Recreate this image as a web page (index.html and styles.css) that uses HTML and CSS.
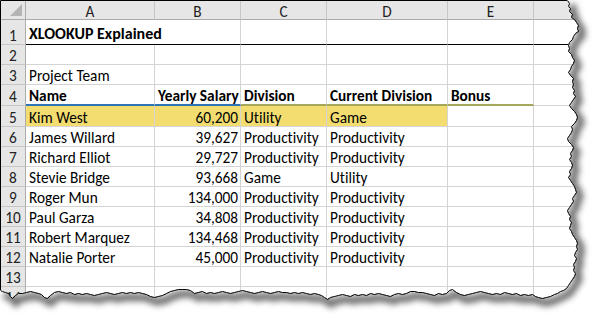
FILE: index.html
```html
<!DOCTYPE html>
<html>
<head>
<meta charset="utf-8">
<link rel="stylesheet" href="styles.css">
</head>
<body>
<div class="page">
  <div class="sheet">
    <div class="corner"><span class="tri"></span></div>
    <div class="ch">A</div><div class="ch">B</div><div class="ch">C</div><div class="ch">D</div><div class="ch">E</div><div class="ch">F</div>

    <div class="rh r1">1</div><div class="c r1 title span2">XLOOKUP Explained</div><div class="c r1"></div><div class="c r1"></div><div class="c r1"></div><div class="c r1"></div>

    <div class="rh">2</div><div class="c"></div><div class="c"></div><div class="c"></div><div class="c"></div><div class="c"></div><div class="c"></div>

    <div class="rh">3</div><div class="c">Project Team</div><div class="c"></div><div class="c"></div><div class="c"></div><div class="c"></div><div class="c"></div>

    <div class="rh">4</div><div class="c b hb">Name</div><div class="c b hb">Yearly Salary</div><div class="c b ho">Division</div><div class="c b ho">Current Division</div><div class="c b ho">Bonus</div><div class="c"></div>

    <div class="rh">5</div><div class="c y">Kim West</div><div class="c y num">60,200</div><div class="c y">Utility</div><div class="c y">Game</div><div class="c"></div><div class="c"></div>

    <div class="rh">6</div><div class="c">James Willard</div><div class="c num">39,627</div><div class="c">Productivity</div><div class="c">Productivity</div><div class="c"></div><div class="c"></div>

    <div class="rh">7</div><div class="c">Richard Elliot</div><div class="c num">29,727</div><div class="c">Productivity</div><div class="c">Productivity</div><div class="c"></div><div class="c"></div>

    <div class="rh">8</div><div class="c">Stevie Bridge</div><div class="c num">93,668</div><div class="c">Game</div><div class="c">Utility</div><div class="c"></div><div class="c"></div>

    <div class="rh">9</div><div class="c">Roger Mun</div><div class="c num">134,000</div><div class="c">Productivity</div><div class="c">Productivity</div><div class="c"></div><div class="c"></div>

    <div class="rh">10</div><div class="c">Paul Garza</div><div class="c num">34,808</div><div class="c">Productivity</div><div class="c">Productivity</div><div class="c"></div><div class="c"></div>

    <div class="rh">11</div><div class="c">Robert Marquez</div><div class="c num">134,468</div><div class="c">Productivity</div><div class="c">Productivity</div><div class="c"></div><div class="c"></div>

    <div class="rh">12</div><div class="c">Natalie Porter</div><div class="c num">45,000</div><div class="c">Productivity</div><div class="c">Productivity</div><div class="c"></div><div class="c"></div>

    <div class="rh">13</div><div class="c"></div><div class="c"></div><div class="c"></div><div class="c"></div><div class="c"></div><div class="c"></div>

    <div class="rh">14</div><div class="c"></div><div class="c"></div><div class="c"></div><div class="c"></div><div class="c"></div><div class="c"></div>
  </div>

  <svg class="tear" width="597" height="319" viewBox="0 0 597 319" aria-hidden="true">
    <defs>
      <path id="edge" d="M567,0 L569,3 568,6 570,8 569,11 572,14 571,17 574,19 576,22 578,25 577,28 578,31 575,33 573,36 572,39 569,42 568,45 569,48 568,51 571,54 572,57 574,60 573,63 571,66 570,69 568,72 570,75 573,78 572,81 573,84 572,87 574,90 573,93 575,96 573,99 571,102 569,105 571,108 574,111 576,114 577,117 576,120 574,123 571,126 572,129 571,132 569,135 567,138 568,141 571,144 573,147 572,150 570,153 571,156 569,159 571,162 572,165 571,168 569,171 570,174 568,177 570,180 572,183 574,186 575,189 576,192 574,195 572,198 573,201 571,204 569,207 567,210 568,213 570,216 569,219 571,222 570,225 569,228 571,231 572,234 574,237 576,240 577,243 576,246 577,249 575,252 574,255 576,258 575,261 573,264 574,267 573,270 575,273 574,276 572,279 570,282 568,285 566,288 563,290 560,291 557,293 554,294 550,296 546,297 542,298 538,297 535,296 532,294 528,295 524,294 520,295 516,293 512,294 508,293 504,292 500,294 496,293 492,294 488,293 484,292 480,291 476,292 472,293 468,294 464,295 460,294 456,292 452,289 449,290 446,293 442,294 438,293 434,295 430,294 426,293 422,292 418,292 414,291 410,291 406,293 402,294 398,293 394,294 390,296 386,295 382,294 378,293 374,294 370,293 366,295 362,294 358,295 354,294 350,296 346,295 342,294 338,295 334,296 330,297 327,299 324,297 321,295 318,294 314,293 310,294 306,293 302,292 298,293 294,292 290,293 286,292 282,292 278,291 274,292 270,293 266,292 262,291 258,292 254,293 250,292 246,291 242,290 238,291 234,292 230,293 226,292 222,291 218,292 214,293 210,292 206,293 202,291 198,292 194,293 190,290 186,289 182,289 178,289 174,290 170,291 166,293 162,295 158,296 154,297 150,296 146,294 142,293 138,292 134,293 130,292 126,293 122,292 118,293 114,294 110,293 106,292 102,293 98,294 94,295 90,294 86,293 82,294 78,293 74,294 70,292 66,293 62,292 58,291 54,292 50,295 47,298 44,297 41,294 38,293 34,292 30,291 26,292 22,293 18,293 15,295 12,298 10,296 8,293 5,292 2,291 0,290"/>
      <clipPath id="outside">
        <path clip-rule="evenodd" d="M-20,-20 H620 V340 H-20 Z M0,0 L567,0 L569,3 568,6 570,8 569,11 572,14 571,17 574,19 576,22 578,25 577,28 578,31 575,33 573,36 572,39 569,42 568,45 569,48 568,51 571,54 572,57 574,60 573,63 571,66 570,69 568,72 570,75 573,78 572,81 573,84 572,87 574,90 573,93 575,96 573,99 571,102 569,105 571,108 574,111 576,114 577,117 576,120 574,123 571,126 572,129 571,132 569,135 567,138 568,141 571,144 573,147 572,150 570,153 571,156 569,159 571,162 572,165 571,168 569,171 570,174 568,177 570,180 572,183 574,186 575,189 576,192 574,195 572,198 573,201 571,204 569,207 567,210 568,213 570,216 569,219 571,222 570,225 569,228 571,231 572,234 574,237 576,240 577,243 576,246 577,249 575,252 574,255 576,258 575,261 573,264 574,267 573,270 575,273 574,276 572,279 570,282 568,285 566,288 563,290 560,291 557,293 554,294 550,296 546,297 542,298 538,297 535,296 532,294 528,295 524,294 520,295 516,293 512,294 508,293 504,292 500,294 496,293 492,294 488,293 484,292 480,291 476,292 472,293 468,294 464,295 460,294 456,292 452,289 449,290 446,293 442,294 438,293 434,295 430,294 426,293 422,292 418,292 414,291 410,291 406,293 402,294 398,293 394,294 390,296 386,295 382,294 378,293 374,294 370,293 366,295 362,294 358,295 354,294 350,296 346,295 342,294 338,295 334,296 330,297 327,299 324,297 321,295 318,294 314,293 310,294 306,293 302,292 298,293 294,292 290,293 286,292 282,292 278,291 274,292 270,293 266,292 262,291 258,292 254,293 250,292 246,291 242,290 238,291 234,292 230,293 226,292 222,291 218,292 214,293 210,292 206,293 202,291 198,292 194,293 190,290 186,289 182,289 178,289 174,290 170,291 166,293 162,295 158,296 154,297 150,296 146,294 142,293 138,292 134,293 130,292 126,293 122,292 118,293 114,294 110,293 106,292 102,293 98,294 94,295 90,294 86,293 82,294 78,293 74,294 70,292 66,293 62,292 58,291 54,292 50,295 47,298 44,297 41,294 38,293 34,292 30,291 26,292 22,293 18,293 15,295 12,298 10,296 8,293 5,292 2,291 0,290 Z"/>
      </clipPath>
      <filter id="blur" x="-10%" y="-10%" width="120%" height="120%">
        <feGaussianBlur stdDeviation="3"/>
      </filter>
    </defs>
    <g clip-path="url(#outside)">
      <rect x="0" y="0" width="597" height="319" fill="#fff"/>
      <g filter="url(#blur)">
        <use href="#edge" transform="translate(4,5)" fill="none" stroke="#000" stroke-opacity="0.6" stroke-width="7"/>
      </g>
    </g>
    <use href="#edge" fill="none" stroke="#000" stroke-width="1" transform="translate(0.5,0.5)"/>
    <path d="M0.5,290 V0.5 H567" fill="none" stroke="#000" stroke-width="1"/>
  </svg>
</div>
</body>
</html>
```

FILE: styles.css
```css
html, body {
  margin: 0;
  padding: 0;
  background: #fff;
}

.page {
  position: relative;
  width: 597px;
  height: 319px;
  overflow: hidden;
}

.sheet {
  display: grid;
  grid-template-columns: 25px 129px 86px 86px 121px 86px 86px;
  grid-template-rows: 19px 25px 20px 20px 21px 21px repeat(9, 20px);
  padding: 1px 0 0 1px;
  font-family: Carlito, Calibri, Lato, "Liberation Sans", sans-serif;
  font-size: 15.3px;
  font-variant-ligatures: none;
  color: #000;
  width: 640px;
}

.sheet > div {
  box-sizing: border-box;
  border-right: 1px solid #d4d4d4;
  border-bottom: 1px solid #d4d4d4;
  display: flex;
  align-items: flex-end;
  white-space: nowrap;
  overflow: hidden;
  line-height: 15px;
}

.corner {
  position: relative;
  background: #e6e6e6;
  border-right-color: #ababab !important;
  border-bottom-color: #ababab !important;
}

.tri {
  position: absolute;
  right: 3px;
  bottom: 3px;
  width: 0;
  height: 0;
  border-left: 12px solid transparent;
  border-bottom: 12px solid #b4b4b4;
}

.ch {
  background: #e6e6e6;
  justify-content: center;
  color: #222;
  border-right-color: #c6c6c6 !important;
  border-bottom-color: #ababab !important;
  padding-bottom: 0;
}

.rh {
  background: #e6e6e6;
  justify-content: center;
  color: #222;
  border-right-color: #ababab !important;
  border-bottom-color: #c6c6c6 !important;
  padding-bottom: 1px;
}

.c {
  padding: 0 2px 1px 3px;
}

.r1 {
  border-bottom: 1px solid #000 !important;
}

.rh.r1 {
  border-bottom: 1px solid #c6c6c6 !important;
}

.title {
  font-weight: bold;
  font-size: 16px;
  padding-bottom: 3px;
}

.span2 {
  grid-column: span 2;
}

.b {
  font-weight: bold;
}

.hb {
  border-bottom: 2px solid #2e75b6 !important;
}

.ho {
  border-bottom: 2px solid #a5a85a !important;
}

.y {
  background: #f3dd70;
}

.num {
  justify-content: flex-end;
}

.tear {
  position: absolute;
  left: 0;
  top: 0;
  pointer-events: none;
}
```
